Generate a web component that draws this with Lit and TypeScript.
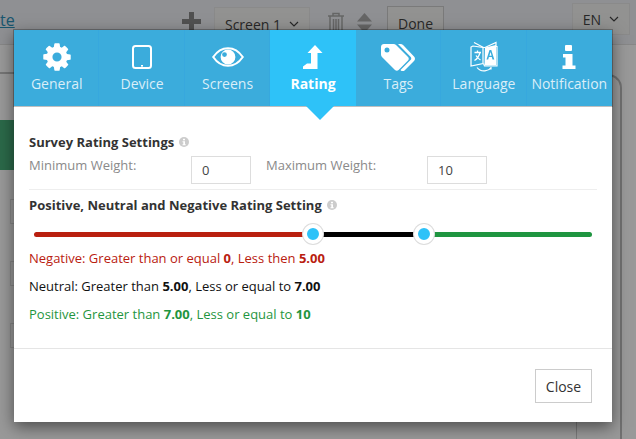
import { LitElement, html, css, svg } from "lit";
import { customElement, state } from "lit/decorators.js";

const gear = svg`<svg class="ic" width="32" height="32" viewBox="0 0 1792 1792"><path fill="#fff" d="M1152 896q0-106-75-181t-181-75-181 75-75 181 75 181 181 75 181-75 75-181zm512-109v222q0 12-8 23t-20 13l-185 28q-19 54-39 91 35 50 107 138 10 12 10 25t-9 23q-27 37-99 108t-94 71q-12 0-26-9l-138-108q-44 23-91 38-16 136-29 186-7 28-36 28h-222q-14 0-24.5-8.5t-11.5-21.5l-28-184q-49-16-90-37l-141 107q-10 9-25 9-14 0-25-11-126-114-165-168-7-10-7-23 0-12 8-23 15-21 51-66.5t54-70.5q-27-50-41-99l-183-27q-13-2-21-12.5t-8-23.5v-222q0-12 8-23t19-13l186-28q14-46 39-92-40-57-107-138-10-12-10-24 0-10 9-23 26-36 98.5-107.5t94.5-71.5q13 0 26 10l138 107q44-23 91-38 16-136 29-186 7-28 36-28h222q14 0 24.5 8.5t11.5 21.5l28 184q49 16 90 37l142-107q9-9 24-9 13 0 25 10 129 119 165 170 7 8 7 22 0 12-8 23-15 21-51 66.5t-54 70.5q26 50 41 98l183 28q13 2 21 12.5t8 23.5z"/></svg>`;
const tablet = svg`<svg class="ic" width="20" height="24" viewBox="0 0 20 24"><rect x="1" y="1" width="18" height="22" rx="2.5" fill="none" stroke="#fff" stroke-width="2"/><rect x="9" y="20" width="2" height="1.6" fill="#fff"/></svg>`;
const eye = svg`<svg class="ic" width="32" height="20" viewBox="0 0 32 20"><path d="M1.2 10C5 4.4 10 1.2 16 1.2S27 4.4 30.8 10C27 15.6 22 18.8 16 18.8S5 15.6 1.2 10Z" fill="none" stroke="#fff" stroke-width="2"/><path fill-rule="evenodd" d="M16 2.6a7.4 7.4 0 1 1 0 14.8 7.4 7.4 0 0 1 0-14.8ZM12.5 5.2a2.4 2.4 0 1 0 0 4.8 2.4 2.4 0 0 0 0-4.8Z" fill="#fff"/></svg>`;
const arrow = svg`<svg class="ic" width="20" height="24" viewBox="0 0 20 24"><path d="M12 0 19.500 8H14.500V24H0V21.500L4 18.500H8V8H4.500Z" fill="#fff"/></svg>`;
const tags = svg`<svg class="ic" width="34" height="27" viewBox="0 0 34 27"><path fill-rule="evenodd" d="M3 0h9.500c1 0 2 .4 2.800 1.200L27 13c1 1 1 2.600 0 3.600L17.600 26c-1 1-2.600 1-3.600 0L1.200 13.300C.4 12.500 0 11.500 0 10.500V3C0 1.300 1.300 0 3 0ZM6 3.500a2.500 2.500 0 1 0 0 5 2.500 2.500 0 0 0 0-5Z" fill="#fff"/><path d="M17 0h2.500c1 0 2 .4 2.800 1.200L33 12.500c1.300 1.300 1.300 3.300 0 4.600L23.500 26.500c-1 1-2.600 1-3.600 0l-.4-.4 10-10c1-1 1-2.400 0-3.400Z" fill="#fff"/></svg>`;
const lang = svg`<svg class="ic" width="28" height="32" viewBox="0 0 28 32"><path d="M3 5 1 6v19l12-2.500V6.500Z" fill="none" stroke="#fff" stroke-width="1.200"/><path d="M4 1.500 13.500 6.500 15 6.500 26 1.500V5.500H27V25H14.500L13.500 22.500" fill="none" stroke="#fff" stroke-width="1.200"/><path d="M15 6.500 26 4V24.500H14.500Z" fill="#fff"/><path d="M4.500 11.500h6.500M7.500 9.500v2M10 11.500c-1 4-3 6.500-5.500 8M6 14.500c1.200 2 2.800 3.500 4.500 4.500" fill="none" stroke="#fff" stroke-width="1.300"/><path fill="#3bacdc" d="M19.500 9h1.800l3 9.500h-1.800l-.7-2.400h-2.900l-.7 2.400h-1.700ZM19.400 14.800h2.200l-1.100-3.900Z" fill-rule="evenodd"/><path d="M7 26.500c1.800 2.400 5 3.600 8 3.300 2.500-.2 4.500-1.200 6-3M21 26v2h-2" fill="none" stroke="#fff" stroke-width="1.200"/></svg>`;
const info = svg`<svg class="ic" width="14" height="24" viewBox="0 0 14 24"><rect x="3" y="0" width="7" height="6" rx="1" fill="#fff"/><path d="M1 9h9.500v11.500H13.500V24H.5v-3.500h3V12.500H1Z" fill="#fff"/></svg>`;
const infoSmall = svg`<svg class="hint" width="10" height="10" viewBox="0 0 10 10"><circle cx="5" cy="5" r="5" fill="#ccc"/><rect x="4" y="1.800" width="2" height="1.500" fill="#fff"/><path d="M3.500 4.200H6v3h.7v1H3.500v-1h.8v-2h-.8Z" fill="#fff"/></svg>`;
const chev = svg`<svg class="chev" width="10" height="6" viewBox="0 0 10 6"><path d="M1 1l4 4 4-4" fill="none" stroke="#444" stroke-width="1.200"/></svg>`;

const TABS = [
  { label: "General", icon: gear },
  { label: "Device", icon: tablet },
  { label: "Screens", icon: eye },
  { label: "Rating", icon: arrow },
  { label: "Tags", icon: tags },
  { label: "Language", icon: lang },
  { label: "Notification", icon: info },
];

@customElement("app-root")
export class AppRoot extends LitElement {
  @state() active = "Rating";

  static styles = css`
    :host { display: block; width: 636px; height: 439px; position: relative; overflow: hidden; font-family: "Open Sans", sans-serif; color: #333; background: #fff; }
    .page { height: 439px; display: flex; flex-direction: column; }
    .toolbar { height: 45px; flex: none; box-sizing: border-box; background: #eef0f6; border-bottom: 1px solid #e2e2e2; display: flex; align-items: flex-start; font-size: 16px; }
    .link { color: #2b8fb8; text-decoration: underline; font-size: 16px; margin-top: 10px; width: 182px; line-height: 20px; }
    .plus { margin-top: 12px; margin-right: 13px; width: 19px; height: 19px; flex: none; }
    .select { box-sizing: border-box; background: #f4f4f2; border: 1px solid #e6e6e6; display: flex; align-items: center; justify-content: center; gap: 8px; color: #444; }
    .screen { width: 96px; height: 34px; margin-top: 7px; font-size: 14px; }
    .trash { margin: 12px 12px 0 17px; flex: none; }
    .sort { margin: 13px 15px 0 0; flex: none; }
    .done { box-sizing: border-box; width: 57px; height: 34px; margin-top: 6px; background: #f4f4f2; border: 1px solid #ccc; font: 14px "Open Sans", sans-serif; color: #444; padding: 0; }
    .en { width: 58px; height: 32px; margin: 3px 0 0 128px; font-size: 14px; }
    .main { flex: 1; display: flex; min-height: 0; }
    .left { flex: 1; display: flex; flex-direction: column; }
    .subbar { height: 27px; flex: none; border-bottom: 2px solid #c4c4c4; }
    .band { height: 50px; flex: none; margin-top: 46px; background: #48b07b; }
    .field { width: 100px; height: 25px; flex: none; box-sizing: border-box; margin: 29px 0 0 10px; border: 1px solid #e0e0e0; }
    .field + .field { margin-top: 37px; }
    .panel { width: 46px; flex: none; box-sizing: border-box; margin-top: 29px; margin-right: 14px; border: 2px solid #bdbdbd; border-bottom: 0; border-left: 1px solid #ccc; border-top-right-radius: 14px; }
    .backdrop { position: absolute; inset: 0; background: rgba(0,0,0,.4); }
    .modal { position: absolute; left: 14px; top: 30px; width: 598px; height: 392px; background: #fff; box-shadow: 0 5px 15px rgba(0,0,0,.5); display: flex; flex-direction: column; }
    .tabs { display: grid; grid-template-columns: repeat(7, 1fr); height: 76px; flex: none; background: #3bacdc; outline: 1px solid rgba(0,0,0,.25); }
    .tab { position: relative; display: flex; flex-direction: column; align-items: center; font-size: 14px; line-height: 19px; color: rgba(255,255,255,.82); box-shadow: inset -1px 0 0 #37a8de; }
    .tab:last-child { box-shadow: none; }
    .tab.on { background: #2ec2f8; color: #fff; font-weight: 700; box-shadow: none; }
    .tab.on::after { content: ""; position: absolute; left: 36px; top: 76px; width: 0; height: 0; border: 14px solid transparent; border-bottom: 0; border-top-color: #2ec2f8; }
    .icw { height: 44px; box-sizing: border-box; padding-top: 10px; display: flex; align-items: center; justify-content: center; }
    .ic { display: block; }
    .body { flex: 1; box-sizing: border-box; padding: 0 15px; display: flex; flex-direction: column; border-bottom: 1px solid #e5e5e5; }
    h4 { margin: 0; font-size: 13px; line-height: 18px; font-weight: 700; color: #333; display: flex; align-items: center; gap: 5px; }
    .t1 { margin-top: 27px; }
    .weights { display: flex; align-items: flex-start; height: 33px; margin-top: 5px; border-bottom: 1px solid #eee; box-sizing: content-box; }
    .weights label { font-size: 13px; line-height: 18px; color: #8a8a8a; }
    .box { box-sizing: border-box; width: 60px; height: 28px; border: 1px solid #ddd; font-size: 13px; line-height: 26px; padding-left: 10px; color: #444; }
    .l1 { width: 162px; } .l2 { width: 161px; margin-left: 15px; }
    .t2 { margin-top: 6px; }
    .slider { margin: 9px 5px 0; height: 22px; display: flex; align-items: center; flex: none; }
    .seg { height: 5px; }
    .red { background: #b9200f; border-radius: 3px 0 0 3px; width: 279px; }
    .blk { background: #000; width: 111px; }
    .grn { background: #1f9540; border-radius: 0 3px 3px 0; flex: 1; }
    .knob { flex: none; box-sizing: border-box; width: 20px; height: 20px; margin: 0 -10px; position: relative; border-radius: 50%; background: #2ec2f8; border: 4px solid #fff; box-shadow: 0 0 0 1px #ddd; }
    .lines { font-size: 13px; line-height: 18px; margin-top: 4px; display: flex; flex-direction: column; gap: 10px; }
    .lines div { white-space: nowrap; }
    .neg { color: #b9200f; } .neu { color: #111; } .pos { color: #1f9540; }
    .foot { height: 73px; flex: none; box-sizing: border-box; padding: 20px 20px 0 0; display: flex; justify-content: flex-end; align-items: flex-start; }
    .close { box-sizing: border-box; width: 57px; height: 34px; background: #fff; border: 1px solid #ccc; font: 14px "Open Sans", sans-serif; color: #333; padding: 0; }
  `;

  render() {
    return html`
      <div class="page">
        <div class="toolbar">
          <span class="link">te</span>
          <svg class="plus" viewBox="0 0 19 19"><path d="M7 0h5v7h7v5h-7v7H7v-7H0V7h7Z" fill="#888"/></svg>
          <div class="select screen">Screen 1 ${chev}</div>
          <svg class="trash" width="18" height="22" viewBox="0 0 18 22"><path d="M1 4h16M6 4V1.500h6V4M3 4v17h12V4M6.500 7v11M9 7v11M11.500 7v11" fill="none" stroke="#aaa" stroke-width="1.500"/></svg>
          <svg class="sort" width="15" height="20" viewBox="0 0 15 20"><path d="M7.500 0 15 8.500H0ZM7.500 20 15 11.500H0Z" fill="#aaa"/></svg>
          <button class="done">Done</button>
          <div class="select en">EN ${chev}</div>
        </div>
        <div class="main">
          <div class="left">
            <div class="subbar"></div>
            <div class="band"></div>
            <div class="field"></div>
            <div class="field"></div>
            <div class="field"></div>
          </div>
          <div class="panel"></div>
        </div>
      </div>
      <div class="backdrop"></div>
      <div class="modal">
        <div class="tabs">
          ${TABS.map(t => html`<div class="tab ${t.label === this.active ? "on" : ""}"><div class="icw">${t.icon}</div>${t.label}</div>`)}
        </div>
        <div class="body">
          <h4 class="t1">Survey Rating Settings ${infoSmall}</h4>
          <div class="weights">
            <label class="l1">Minimum Weight:</label><div class="box">0</div>
            <label class="l2">Maximum Weight:</label><div class="box">10</div>
          </div>
          <h4 class="t2">Positive, Neutral and Negative Rating Setting ${infoSmall}</h4>
          <div class="slider">
            <div class="seg red"></div><div class="knob"></div><div class="seg blk"></div><div class="knob"></div><div class="seg grn"></div>
          </div>
          <div class="lines">
            <div class="neg">Negative: Greater than or equal <b>0</b>, Less then <b>5.00</b></div>
            <div class="neu">Neutral: Greater than <b>5.00</b>, Less or equal to <b>7.00</b></div>
            <div class="pos">Positive: Greater than <b>7.00</b>, Less or equal to <b>10</b></div>
          </div>
        </div>
        <div class="foot"><button class="close">Close</button></div>
      </div>
    `;
  }
}
